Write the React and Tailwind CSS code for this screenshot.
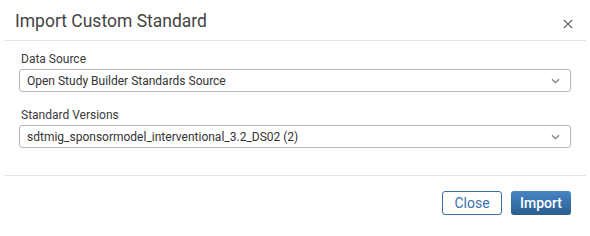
function SelectBox({ value }) {
  return (
    <div className="flex h-[23px] items-center justify-between rounded-[3px] border border-[#b5b5b5] bg-white pl-[7px] pr-[10px]">
      <span className="text-[12px] text-[#333]">{value}</span>
      <svg width="9" height="6" viewBox="0 0 9 6" className="text-[#808080]">
        <path d="M1 1.2l3.5 3.5 3.5-3.5" fill="none" stroke="currentColor" strokeWidth="1.3" />
      </svg>
    </div>
  );
}

export default function App() {
  return (
    <div className="h-[236px] w-[590px] bg-white font-['Roboto',sans-serif]">
      {/* Header */}
      <div className="mx-[4px] flex h-[41px] items-center justify-between border-b border-[#e4e4e4] pl-[11px] pr-[13px]">
        <h1 className="mt-[3px] text-[17.5px] font-normal text-[#444]">Import Custom Standard</h1>
        <svg width="10" height="10" viewBox="0 0 10 10" className="mt-[8px] text-[#555]">
          <path d="M0.8 0.8l8.4 8.4M9.2 0.8l-8.4 8.4" stroke="currentColor" strokeWidth="1.1" />
        </svg>
      </div>

      {/* Body */}
      <div className="mx-[4px] border-b border-[#e4e4e4] pb-[27px] px-[15px] pt-[8px]">
        <label className="flex h-[20px] items-center pl-[2px] text-[12px] text-[#3a3a3a]">Data Source</label>
        <SelectBox value="Open Study Builder Standards Source" />
        <label className="mt-[13px] flex h-[20px] items-center pl-[2px] text-[12px] text-[#3a3a3a]">Standard Versions</label>
        <SelectBox value="sdtmig_sponsormodel_interventional_3.2_DS02 (2)" />
      </div>

      {/* Footer */}
      <div className="flex justify-end gap-[9px] pr-[19px] pt-[15px]">
        <button className="h-[24px] w-[60px] rounded-[3px] border border-[#3a6fa8] bg-white text-[14px] text-[#3a72b0]">
          Close
        </button>
        <button className="h-[24px] w-[60px] rounded-[3px] bg-gradient-to-b from-[#4686c6] to-[#2a5d90] text-[14px] font-medium text-white">
          Import
        </button>
      </div>
    </div>
  );
}
